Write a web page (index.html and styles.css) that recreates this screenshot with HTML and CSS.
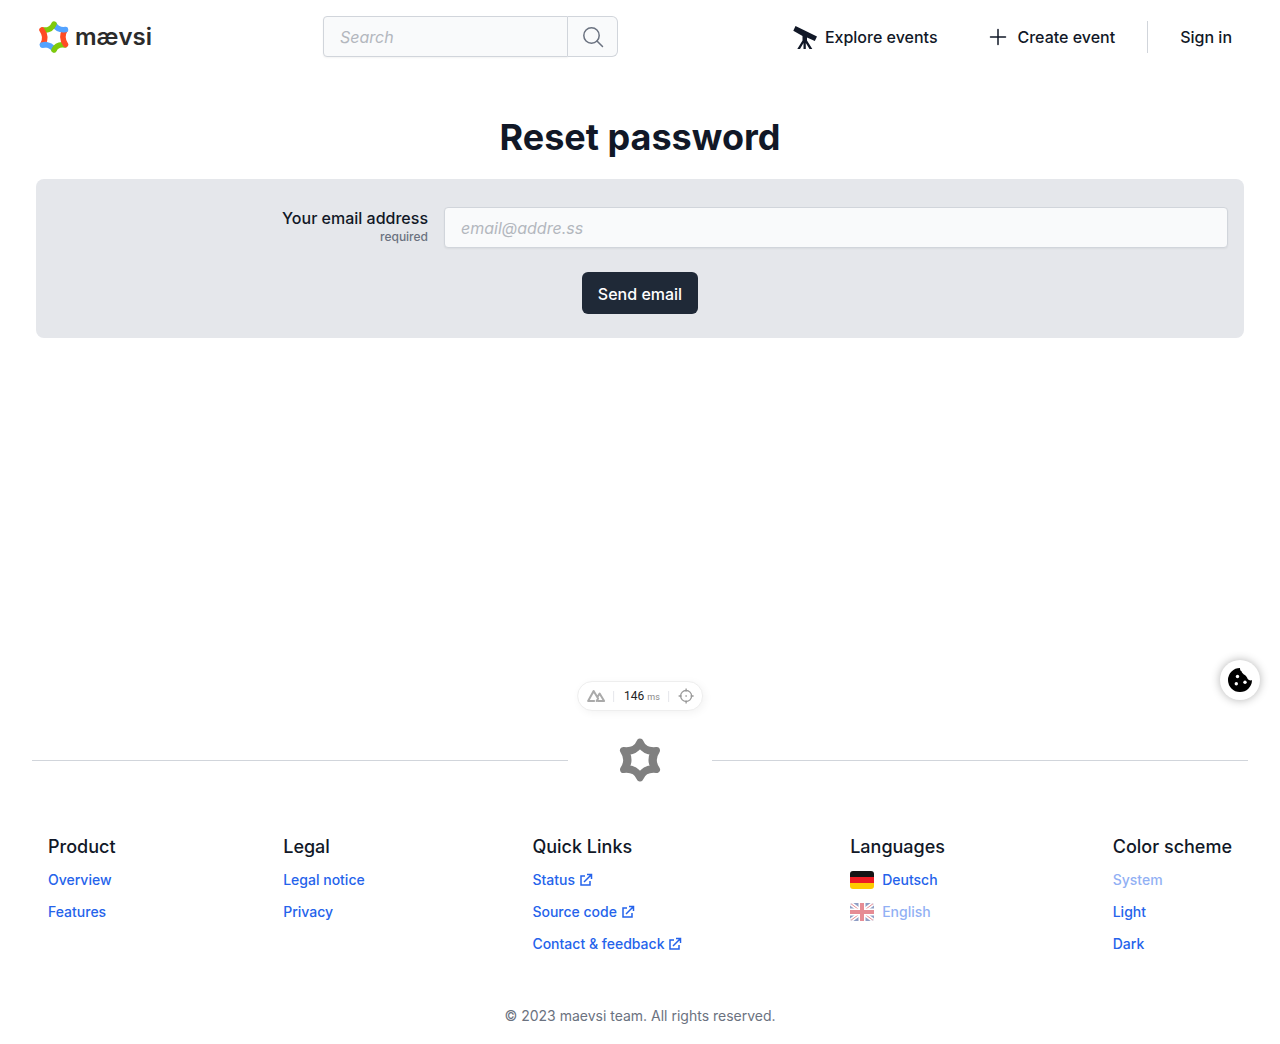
FILE: index.html
```html
<!DOCTYPE html>
<html lang="en">
<head>
<meta charset="utf-8">
<meta name="viewport" content="width=device-width, initial-scale=1">
<title>Reset password · maevsi</title>
<link rel="stylesheet" href="styles.css">
</head>
<body>
<svg class="defs" aria-hidden="true">
  <symbol id="external" viewBox="0 0 14 14"><path d="M6 3H2v9h9V8M5 9l7-7M8 1.500h4.500V6" fill="none" stroke="currentColor" stroke-width="1.500"/></symbol>
</svg>
<div class="page">
  <div class="screen">
    <header class="header">
      <a class="logo" href="#">
        <svg width="32" height="34" viewBox="0 0 32 34" fill="none" stroke-width="5.500" stroke-linecap="round" aria-hidden="true">
          <path d="M4.500 25Q12 23.500 16 29.500" stroke="#54a3ff"/>
          <path d="M16 30Q19 23.500 27 25" stroke="#7fca0a"/>
          <path d="M27.500 24.500Q22.500 17 27 10" stroke="#ff4c24"/>
          <path d="M27.500 9.500Q20 10.500 16.500 5" stroke="#54a3ff"/>
          <path d="M16 4Q13 11 5 10" stroke="#7fca0a"/>
          <path d="M4 10Q9 17 5 24" stroke="#ff4c24"/>
          <path d="M4.500 25l3-.4" stroke="#54a3ff"/>
        </svg>
        <span>mævsi</span>
      </a>
      <form class="search" role="search">
        <input type="search" placeholder="Search" aria-label="Search">
        <button type="button" aria-label="Search">
          <svg width="24" height="24" viewBox="0 0 24 24" fill="none" stroke="currentColor" stroke-width="1.500" stroke-linecap="round" aria-hidden="true"><circle cx="10.500" cy="10.500" r="7.700"/><path d="M16 16l5.500 5.500"/></svg>
        </button>
      </form>
      <nav class="nav">
        <a class="explore" href="#">
          <svg width="24" height="24" viewBox="0 0 24 24" fill="currentColor" aria-hidden="true"><path d="M2.500 1L24 11.500 21.800 16 14 12.500v3L19.300 24h-2.800L12.800 18v6h-2.300v-6L7 24H4.300L9.500 15.500V11L.3 5.700z"/></svg>
          Explore events</a>
        <a class="create" href="#">
          <svg width="24" height="24" viewBox="0 0 24 24" fill="none" stroke="currentColor" stroke-width="1.500" stroke-linecap="round" aria-hidden="true"><path d="M12 4.500v15M4.500 12h15"/></svg>
          Create event</a>
        <a class="sign-in" href="#">Sign in</a>
      </nav>
    </header>
    <main class="main">
      <h1>Reset password</h1>
      <form class="card">
        <div class="field">
          <label for="email">Your email address<span>required</span></label>
          <input id="email" type="email" placeholder="email@addre.ss" required>
        </div>
        <button class="submit" type="button">Send email</button>
      </form>
    </main>
    <div class="devtools">
      <svg width="20" height="14" viewBox="0 0 20 14" fill="none" stroke="#aaa" stroke-width="2" stroke-linejoin="round" stroke-linecap="round" aria-hidden="true"><path d="M8 12H2L7.500 2 12 9.500 10.500 12M12 12H18L13.500 4.500 12 7"/></svg>
      <span class="time">146 <small>ms</small></span>
      <svg width="16" height="16" viewBox="0 0 16 16" fill="none" stroke="#999" stroke-width="1.300" aria-hidden="true"><circle cx="8" cy="8" r="5.500"/><path d="M8 .500v3M8 12.500v3M.500 8h3M12.500 8h3M7.300 8h1.400"/></svg>
    </div>
    <button class="cookie" type="button" aria-label="Cookies">
      <svg width="24" height="24" viewBox="0 0 24 24" aria-hidden="true"><path d="M12 0a12 12 0 1 0 12 12.300c-2 .5-3.500-.3-4.300-1.300-.7-2-1.500-3-2.900-4C15 6 14 5 13.500 3.300 12.200 2.700 12 1.500 12 0z"/><g fill="#fff"><circle cx="9.500" cy="8.500" r="1.700"/><circle cx="8.300" cy="15.800" r="1.700"/><circle cx="17" cy="14.300" r="1.700"/></g></svg>
    </button>
  </div>
  <footer class="footer">
    <div class="divider">
      <svg width="48" height="48" viewBox="0 0 48 48" fill="none" stroke="#808080" stroke-width="7" stroke-linejoin="round" stroke-linecap="round" aria-hidden="true"><path d="M24 6Q28 16 40.500 14.500Q34 24 40.500 33.500Q28 32 24 42Q20 32 7.500 33.500Q14 24 7.500 14.500Q20 16 24 6z"/><path d="M24 9Q28 16 37 16.500Q33 24 37 31.500Q28 32 24 39Q20 32 11 31.500Q15 24 11 16.500Q20 16 24 9z" stroke-width="5"/></svg>
    </div>
    <div class="columns">
      <section><h2>Product</h2><ul><li><a href="#">Overview</a></li><li><a href="#">Features</a></li></ul></section>
      <section><h2>Legal</h2><ul><li><a href="#">Legal notice</a></li><li><a href="#">Privacy</a></li></ul></section>
      <section><h2>Quick Links</h2><ul>
        <li><a href="#">Status <svg width="14" height="14" aria-hidden="true"><use href="#external"/></svg></a></li>
        <li><a href="#">Source code <svg width="14" height="14" aria-hidden="true"><use href="#external"/></svg></a></li>
        <li><a href="#">Contact &amp; feedback <svg width="14" height="14" aria-hidden="true"><use href="#external"/></svg></a></li>
      </ul></section>
      <section class="languages"><h2>Languages</h2><ul>
        <li><a href="#"><svg class="flag" width="24" height="18" aria-hidden="true"><path fill="#141414" d="M0 0h24v6H0z"/><path fill="#ed1c24" d="M0 6h24v6H0z"/><path fill="#fecb00" d="M0 12h24v6H0z"/></svg>Deutsch</a></li>
        <li><a class="current" href="#"><svg class="flag" width="24" height="18" aria-hidden="true"><path fill="#22408c" d="M0 0h24v18H0z"/><path d="M0 0l24 18M24 0L0 18" stroke="#fff" stroke-width="4"/><path d="M0 0l24 18M24 0L0 18" stroke="#cf1b2b" stroke-width="1"/><path d="M12 0v18M0 9h24" stroke="#fff" stroke-width="7"/><path d="M12 0v18M0 9h24" stroke="#cf1b2b" stroke-width="4"/></svg>English</a></li>
      </ul></section>
      <section><h2>Color scheme</h2><ul><li><a class="current" href="#">System</a></li><li><a href="#">Light</a></li><li><a href="#">Dark</a></li></ul></section>
    </div>
    <p class="copyright">© 2023 maevsi team. All rights reserved.</p>
  </footer>
</div>
</body>
</html>
```
FILE: styles.css
```css
* { box-sizing: border-box; }
body { margin: 0; background: #fff; color: #111827; font: 500 16px/24px Inter, "Liberation Sans", sans-serif; }
a { color: inherit; text-decoration: none; }
svg { display: block; flex: none; }
input, button { font: inherit; color: inherit; margin: 0; }
h1, h2, p, ul { margin: 0; padding: 0; }
ul { list-style: none; }
.defs { position: absolute; width: 0; height: 0; }

.page { display: flex; flex-direction: column; min-height: 100vh; }
.screen { position: relative; display: flex; flex-direction: column; flex: 1; }

.header { display: grid; grid-template-columns: minmax(0, 285fr) minmax(0, 295fr) minmax(0, 614fr); align-items: center; padding: 16px 48px 0 38px; }
.logo { display: flex; align-items: center; gap: 5px; color: #2b2b2b; font-size: 24px; font-weight: 600; }
.search { display: flex; height: 41px; color: #6b7280; }
.search input { flex: 1; min-width: 0; padding: 0 16px; border: 1px solid #d1d5db; border-radius: 4px 0 0 4px; background: #f9fafb; box-shadow: 0 1px 2px #0000000d; appearance: none; }
.search button { display: grid; place-items: center; width: 50px; padding: 0; border: 1px solid #d1d5db; border-left: 0; border-radius: 0 6px 6px 0; background: #f9fafb; }
::placeholder { color: #b3b7be; font-style: italic; font-weight: 400; opacity: 1; }
.nav { display: flex; align-items: center; justify-content: flex-end; white-space: nowrap; }
.nav a { display: flex; align-items: center; gap: 8px; }
.create { margin-left: 48px; }
.sign-in { height: 32px; margin-left: 32px; padding-left: 32px; border-left: 1px solid #d1d5db; }

.main { padding: 56px 36px 100px; }
h1 { margin-bottom: 18px; font-size: 36px; font-weight: 700; line-height: 48px; text-align: center; }
.card { display: flex; flex-direction: column; align-items: center; gap: 24px; padding: 28px 16px 24px; border-radius: 8px; background: #e5e7eb; }
.field { display: grid; grid-template-columns: 1fr 2fr; width: 100%; }
.field label { padding-right: 16px; line-height: 22px; text-align: right; }
.field label span { display: block; color: #6b7280; font-size: 12px; font-weight: 500; line-height: 16px; }
.field input { width: 100%; height: 41px; padding: 0 16px; border: 1px solid #d1d5db; border-radius: 4px; background: #f9fafb; box-shadow: 0 1px 2px #0000000d; }
.submit { height: 42px; padding: 2px 16px 0; border: 0; border-radius: 6px; background: #1f2937; color: #fff; }

.devtools { position: absolute; bottom: 9px; left: 50%; transform: translateX(-50%); display: flex; align-items: center; height: 30px; padding: 0 8px; border: 1px solid #eee; border-radius: 15px; background: #fff; box-shadow: 2px 2px 8px #0000000d; }
.time { margin: 0 9px 0 7px; padding: 0 8px 0 10px; border: solid #e5e7eb; border-width: 0 1px; color: #222; font: 12px/10px Roboto, sans-serif; white-space: nowrap; }
.time small { color: #888; font-size: 9px; }
.cookie { position: absolute; right: 20px; bottom: 20px; display: grid; place-items: center; width: 40px; height: 40px; padding: 0; border: 0; border-radius: 50%; background: #fff; box-shadow: 0 0 10px #0000004d; }

.footer { padding: 16px 32px 18px; }
.divider { display: flex; align-items: center; gap: 48px; }
.divider::before, .divider::after { content: ""; flex: 1; height: 1px; background: #d1d5db; }
.columns { display: flex; flex-wrap: wrap; justify-content: space-between; gap: 32px; margin: 48px 16px 0; }
.columns h2 { margin-bottom: 8px; font-size: 18px; font-weight: 500; line-height: 30px; }
.columns ul { display: grid; gap: 12px; }
.columns li { color: #2563eb; font-size: 14px; line-height: 20px; }
.columns li a { display: flex; align-items: center; gap: 4px; }
.languages li a { gap: 8px; }
.columns .current { opacity: .5; }
.flag { border-radius: 3px; }
.copyright { margin-top: 52px; color: #6b7280; font-size: 14px; font-weight: 400; line-height: 20px; text-align: center; }
```
